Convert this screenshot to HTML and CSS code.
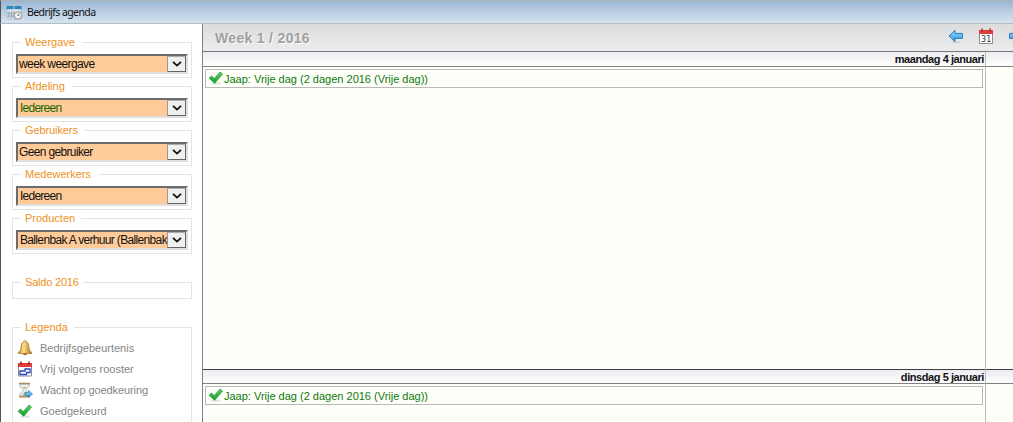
FILE: index.html
```html
<!DOCTYPE html>
<html lang="nl">
<head>
<meta charset="utf-8">
<title>Bedrijfs agenda</title>
<link rel="stylesheet" href="styles.css">
</head>
<body>
<svg class="defs" width="0" height="0">
  <defs>
    <linearGradient id="green" x1="0" y1="0" x2="0" y2="1"><stop offset="0" stop-color="#5fd35f"/><stop offset="1" stop-color="#129a2c"/></linearGradient>
    <linearGradient id="blue" x1="0" y1="0" x2="0" y2="1"><stop offset="0" stop-color="#9bdcfb"/><stop offset="1" stop-color="#2e92dc"/></linearGradient>
    <linearGradient id="gold" x1="0" y1="0" x2="1" y2="0"><stop offset="0" stop-color="#c98a25"/><stop offset=".4" stop-color="#fbe08c"/><stop offset="1" stop-color="#b57418"/></linearGradient>
    <symbol id="check" viewBox="0 0 16 16">
      <ellipse cx="8" cy="13.5" rx="5" ry="1" fill="#000" opacity=".12"/>
      <path d="M1 8.200 3.600 6l2.700 2.600L12 2l2.600 2L6.700 13.300z" fill="url(#green)" stroke="#209a38" stroke-width=".7"/>
    </symbol>
    <symbol id="arrow" viewBox="0 0 16 16">
      <ellipse cx="8" cy="14.200" rx="5" ry=".8" fill="#000" opacity=".12"/>
      <path d="M1 8 7 2.200v3.200h7.500v5H7v3.200z" fill="url(#blue)" stroke="#2c80c4" stroke-width="1"/>
    </symbol>
  </defs>
</svg>
<div class="window">
  <header class="titlebar">
    <svg class="app-icon" width="17" height="16" viewBox="0 0 17 16">
      <path d="M1 4h14v10H1z" fill="#dce5ec" stroke="#a5b3bf" stroke-width=".7"/>
      <path d="M.5 1h7v3h-7zM8.500 1h7v3h-7z" fill="#2e86bd"/>
      <path d="M3 6v7M5.500 6v7M8 6v7M1.500 8.500h8M1.500 11h8" stroke="#8c9ba8" stroke-width=".8"/>
      <circle cx="12" cy="10.500" r="3.700" fill="#f4f4f4" stroke="#8d8f92"/>
      <path d="M12 8.500v2.300l1.700-1" fill="none" stroke="#555" stroke-width=".8"/>
    </svg>
    <span class="app-name">Bedrijfs agenda</span>
  </header>
  <div class="body">
    <aside class="sidebar">
      <section class="group"><h2 class="w61">Weergave</h2>
        <div class="select"><span class="value">week weergave</span><span class="drop"><svg width="10" height="6" viewBox="0 0 10 6"><path d="M1 .8 5 4.600 9 .8"/></svg></span></div></section>
      <section class="group"><h2 class="w51">Afdeling</h2>
        <div class="select"><span class="value everyone">Iedereen</span><span class="drop"><svg width="10" height="6" viewBox="0 0 10 6"><path d="M1 .8 5 4.600 9 .8"/></svg></span></div></section>
      <section class="group"><h2 class="w64">Gebruikers</h2>
        <div class="select"><span class="value tight">Geen gebruiker</span><span class="drop"><svg width="10" height="6" viewBox="0 0 10 6"><path d="M1 .8 5 4.600 9 .8"/></svg></span></div></section>
      <section class="group"><h2 class="w78">Medewerkers</h2>
        <div class="select"><span class="value all">Iedereen</span><span class="drop"><svg width="10" height="6" viewBox="0 0 10 6"><path d="M1 .8 5 4.600 9 .8"/></svg></span></div></section>
      <section class="group"><h2 class="w60">Producten</h2>
        <div class="select"><span class="value product">Ballenbak A verhuur (Ballenbak</span><span class="drop"><svg width="10" height="6" viewBox="0 0 10 6"><path d="M1 .8 5 4.600 9 .8"/></svg></span></div></section>
      <section class="group balance"><h2 class="w62">Saldo 2016</h2></section>
      <section class="group legend"><h2 class="w53">Legenda</h2>
        <ul>
          <li><svg width="16" height="16" viewBox="0 0 16 16"><ellipse cx="8" cy="14" rx="2" ry="1.300" fill="#a8690f"/><path d="M8 .8c-.9 0-1.200.6-1.200 1.200C4.300 2.700 4.300 5 4 8c-.2 2-1.200 3.300-2.600 4.200v1.300h13.200v-1.300C13.200 11.300 12.200 10 12 8c-.3-3-.3-5.300-2.800-6 0-.6-.3-1.200-1.200-1.200z" fill="url(#gold)" stroke="#a87524" stroke-width=".8"/></svg><span>Bedrijfsgebeurtenis</span></li>
          <li><svg width="16" height="16" viewBox="0 0 16 16"><path d="M1.500 3h13v12h-13z" fill="#fff" stroke="#8a8a9a"/><path d="M1 2h14v4H1z" fill="#e23b3b"/><path d="M4 .5v3M12 .5v3" stroke="#9c2323" stroke-width="1.500"/><path d="M3 10h5V8h5v3.500H9.500v2H3z" fill="#fff" stroke="#2846c8" stroke-width="1.300"/></svg><span>Vrij volgens rooster</span></li>
          <li><svg width="16" height="16" viewBox="0 0 16 16"><path d="M3 2v2.500L6.500 8 3 12v2h9v-2L8.500 8 12 4.500V2z" fill="#edf4f8" stroke="#9aa5ad" stroke-width=".8"/><path d="M5 5h5L7.500 7zM7.500 10l3 3.500h-6z" fill="#d8b271"/><path d="M2 .8h11v1.500H2zM2 14h11v1.500H2z" fill="#b08a65"/><path d="M8 10.500h3.500V8.500l4 3.500-4 3.500v-2H8z" fill="url(#blue)" stroke="#2777ba" stroke-width=".7"/></svg><span class="waiting">Wacht op goedkeuring</span></li>
          <li><svg width="16" height="16"><use href="#check"/></svg><span>Goedgekeurd</span></li>
        </ul></section>
    </aside>
    <main class="agenda">
      <div class="toolbar"><h1>Week 1 / 2016</h1>
        <nav class="tools">
          <svg width="16" height="16"><use href="#arrow"/></svg>
          <svg width="16" height="17" viewBox="0 0 16 17"><path d="M1.500 4h13v11.500h-13z" fill="#fff" stroke="#8d8d8d"/><path d="M1 2h14v4H1z" fill="#e03c3c"/><path d="M4 .5v3M12 .5v3" stroke="#8f2a2a" stroke-width="1.800"/><path d="M4 .5v2M12 .5v2" stroke="#f6b5b5" stroke-width=".6"/><text x="8.200" y="14" text-anchor="middle" class="cal-number">31</text></svg>
          <svg width="16" height="16" viewBox="0 0 16 16"><path d="M15 8 9 2.200v3.200H1.500v5H9v3.200z" fill="url(#blue)" stroke="#2c80c4"/></svg>
        </nav></div>
      <div class="week">
        <div class="days">
          <section class="day"><h3>maandag 4 januari</h3>
            <div class="slot"><div class="event"><svg width="16" height="16"><use href="#check"/></svg><span>Jaap: Vrije dag (2 dagen 2016 (Vrije dag))</span></div></div></section>
          <section class="day"><h3>dinsdag 5 januari</h3>
            <div class="slot"><div class="event"><svg width="16" height="16"><use href="#check"/></svg><span>Jaap: Vrije dag (2 dagen 2016 (Vrije dag))</span></div></div></section>
        </div>
        <div class="days side"><section class="day"><h3></h3><div class="slot"></div></section><section class="day"><h3></h3><div class="slot"></div></section></div>
      </div>
    </main>
  </div>
</div>
</body>
</html>
```

FILE: styles.css
```css
* { box-sizing: border-box; }
body { margin: 0; width: 1013px; height: 422px; overflow: hidden; font: 11px/13px "Liberation Sans", Arial, sans-serif; }
h1, h2, h3, ul { margin: 0; padding: 0; font-weight: normal; font-size: 11px; }
svg { flex: none; display: block; }
.defs { position: absolute; }
.window { height: 422px; display: flex; flex-direction: column; overflow: hidden; }
.titlebar { height: 24px; flex: none; display: flex; padding: 4px 0 0 5px; border-top: 1px solid #a9b3bc; border-left: 1px solid #55565a; border-bottom: 1px solid #b5bbc0; background: linear-gradient(#9cb7d3, #d6e4f2); }
.app-name { margin: 0 0 0 4px; font: 10.5px/15px "Noto Sans", sans-serif; color: #111; letter-spacing: -.6px; }
.body { flex: 1; min-height: 0; display: flex; }
.sidebar { width: 202px; flex: none; border-left: 1px solid #55565a; background: #fff; padding: 18px 10px 0 11px; }
.group { width: 180px; height: 36px; margin-bottom: 8px; border: 1px solid #e3e3e3; padding: 0 3px; }
.group h2 { height: 12px; margin: -7px 0 0 5px; padding-left: 4px; line-height: 13px; background: #fff; color: #ee9222; white-space: nowrap; }
.w51 { width: 51px; }
.w53 { width: 53px; }
.w60 { width: 60px; }
.w61 { width: 61px; }
.w62 { width: 62px; letter-spacing: -.2px; }
.w64 { width: 64px; letter-spacing: -.1px; }
.w78 { width: 78px; }
.select { width: 172px; height: 20px; margin-top: 6px; display: flex; border: 2px solid; border-color: #6b6b6b #e2e0de #e2e0de #6b6b6b; background: #ffcb98; }
.value { flex: 1; min-width: 0; overflow: hidden; padding-left: 1px; font-size: 12px; line-height: 17px; color: #111; white-space: nowrap; letter-spacing: -.6px; }
.everyone, .all, .product { padding-left: 2px; letter-spacing: -.75px; }
.everyone { color: #1a6400; }
.tight { letter-spacing: -.65px; }
.product { letter-spacing: -.66px; }
.drop { width: 19px; height: 16px; flex: none; display: flex; align-items: center; justify-content: center; border: 1px solid; border-color: #aaa #666 #666 #999; background: #f0f0f0; }
.drop path { fill: none; stroke: #111; stroke-width: 1.8; }
.balance { height: 17px; margin-top: 28px; margin-bottom: 28px; }
.legend { height: 120px; margin: 0; }
.legend ul { list-style: none; padding: 5px 0 0 1px; }
.legend li { height: 21px; display: flex; align-items: center; gap: 7px; color: #858585; white-space: nowrap; }
.legend li svg { margin-top: -2px; }
.waiting { letter-spacing: -.08px; }
.agenda { flex: 1; min-width: 0; border-left: 1px solid #808080; display: flex; flex-direction: column; }
.toolbar { height: 28px; flex: none; display: flex; justify-content: space-between; border-bottom: 1px solid #777; background: linear-gradient(#dcdcdc, #ececec); overflow: hidden; }
.toolbar h1 { padding-left: 12px; font-size: 14px; line-height: 28px; font-weight: bold; letter-spacing: .32px; color: #a0a0a0; text-shadow: 1px 1px 0 #fafafa; }
.tools { width: 65px; flex: none; display: flex; gap: 14px; padding-top: 4px; }
.cal-number { font: 8px "DejaVu Sans", sans-serif; fill: #333; }
.week { flex: 1; display: flex; }
.days { width: 782px; flex: none; }
.side { width: 28px; border-left: 1px solid #bbb; }
.day h3 { height: 15px; border-bottom: 1px solid #808080; background: linear-gradient(#ececf2, #fff); text-align: right; padding-right: 1px; line-height: 15px; font-weight: bold; letter-spacing: -.43px; color: #111; }
.day + .day h3 { border-top: 1px solid #404040; }
.slot { height: 302px; padding: 2px; background: #fefff8; }
.event { width: 778px; height: 19px; display: flex; align-items: center; border: 1px solid #b9b9b9; padding-left: 2px; color: #0e780e; white-space: nowrap; }
.event span { padding-top: 2px; }
.event svg { margin-top: -1px; }
```
